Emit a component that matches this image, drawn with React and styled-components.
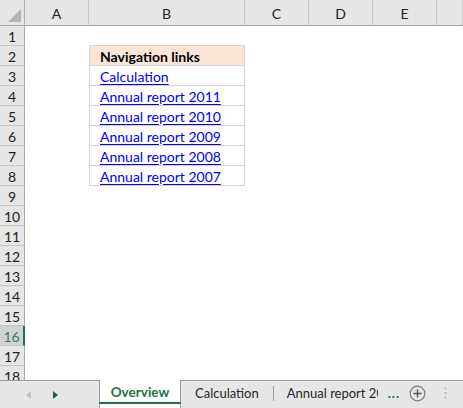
import React from 'react';
import styled, { createGlobalStyle } from 'styled-components';

const GlobalStyle = createGlobalStyle`
  html, body {
    margin: 0;
    padding: 0;
    background: #ffffff;
  }
  body {
    font-family: Lato, "Liberation Sans", sans-serif;
    width: 463px;
    height: 408px;
    overflow: hidden;
  }
`;

const Window = styled.div`
  width: 463px;
  height: 408px;
  display: flex;
  flex-direction: column;
  overflow: hidden;
`;

const Sheet = styled.div`
  flex: 0 0 380px;
  display: grid;
  grid-template-columns: 25px 64px 156px 64px 64px 64px 1fr;
  grid-template-rows: 26px repeat(18, 20px);
  overflow: hidden;
`;

const Corner = styled.div`
  background: #e6e6e6;
  border-right: 1px solid #ababab;
  border-bottom: 1px solid #ababab;
  box-sizing: border-box;
  display: flex;
  align-items: flex-end;
  justify-content: flex-end;
  padding: 0 3px 3px 0;

  svg {
    display: block;
  }
`;

const ColHead = styled.div`
  background: #e6e6e6;
  border-right: 1px solid #c6c6c6;
  border-bottom: 1px solid #ababab;
  box-sizing: border-box;
  display: flex;
  align-items: center;
  justify-content: center;
  font-size: 14px;
  color: #222;
  padding-top: 2px;
`;

const RowHead = styled.div`
  background: ${(p) => (p.$selected ? '#d2d2d2' : '#e6e6e6')};
  border-right: ${(p) => (p.$selected ? '2px solid #217346' : '1px solid #ababab')};
  border-bottom: 1px solid #c6c6c6;
  box-sizing: border-box;
  display: flex;
  align-items: center;
  justify-content: center;
  font-size: 14px;
  color: ${(p) => (p.$selected ? '#3f7a5f' : '#222')};
  padding-top: 1px;
`;

const Cell = styled.div`
  background: #ffffff;
`;

const TableCell = styled.div`
  background: ${(p) => (p.$head ? '#fce4d6' : '#ffffff')};
  border-left: 1px solid #d4d4d4;
  border-right: 1px solid #d4d4d4;
  border-top: ${(p) => (p.$head ? '1px solid #d4d4d4' : 'none')};
  border-bottom: 1px solid #d4d4d4;
  margin-top: ${(p) => (p.$head ? '-1px' : '0')};
  box-sizing: border-box;
  display: flex;
  align-items: center;
  padding: 1px 0 0 10px;
  font-size: 14px;
  font-weight: ${(p) => (p.$head ? 700 : 400)};
  color: #000;
  white-space: nowrap;
  overflow: hidden;
`;

const Link = styled.a`
  color: #0000ff;
  text-decoration: underline;
  text-underline-offset: 2px;
  cursor: pointer;
`;

const TabBar = styled.div`
  flex: 1;
  background: #e6e6e6;
  border-top: 1px solid #9d9d9d;
  box-sizing: border-box;
  display: flex;
  align-items: stretch;
  font-size: 13px;

  & > * {
    flex-shrink: 0;
  }
`;

const NavArea = styled.div`
  width: 99px;
  display: flex;
  align-items: center;
  padding-left: 26px;
  gap: 22px;
  box-sizing: border-box;
`;

const NavArrow = styled.span`
  width: 0;
  height: 0;
  border-top: 4px solid transparent;
  border-bottom: 4px solid transparent;
  ${(p) =>
    p.$dir === 'left'
      ? 'border-right: 5px solid #c4c4c4;'
      : 'border-left: 5px solid #1e5e3a;'}
`;

const ActiveTab = styled.div`
  width: 82px;
  margin-top: -1px;
  background: #ffffff;
  border-left: 1px solid #9d9d9d;
  border-right: 1px solid #9d9d9d;
  box-sizing: border-box;
  display: flex;
  align-items: center;
  justify-content: center;
  position: relative;
  color: #217346;
  font-weight: 700;
  font-size: 13.5px;
  padding-bottom: 4px;

  &::after {
    content: '';
    position: absolute;
    left: -1px;
    right: -1px;
    bottom: 4px;
    height: 2px;
    background: #217346;
  }
`;

const Tab = styled.div`
  display: flex;
  align-items: center;
  padding: 0 14px 3px 14px;
  color: #262626;
  white-space: nowrap;
  overflow: hidden;
  box-sizing: border-box;
  ${(p) => (p.$clip ? 'width: 104px; padding-left: 13px; padding-right: 0;' : '')}
`;

const Separator = styled.span`
  width: 1px;
  height: 15px;
  background: #9d9d9d;
  align-self: center;
  margin-top: -3px;
`;

const More = styled.span`
  display: flex;
  align-items: center;
  color: #217346;
  font-weight: 700;
  padding: 0 0 3px 10px;
  letter-spacing: 1px;
`;

const IconButton = styled.span`
  display: flex;
  align-items: center;
  padding: 0 0 3px ${(p) => p.$gap}px;
`;

const columns = ['A', 'B', 'C', 'D', 'E', ''];
const links = [
  'Calculation',
  'Annual report 2011',
  'Annual report 2010',
  'Annual report 2009',
  'Annual report 2008',
  'Annual report 2007',
];

export default function App() {
  const rows = Array.from({ length: 18 }, (_, i) => i + 1);

  return (
    <Window>
      <GlobalStyle />
      <Sheet>
        <Corner>
          <svg width="13" height="13" viewBox="0 0 13 13">
            <polygon points="13,0 13,13 0,13" fill="#b4b4b4" />
          </svg>
        </Corner>
        {columns.map((c, i) => (
          <ColHead key={i}>{c}</ColHead>
        ))}
        {rows.map((r) => (
          <React.Fragment key={r}>
            <RowHead $selected={r === 16}>{r}</RowHead>
            <Cell />
            {r === 2 ? (
              <TableCell $head>Navigation links</TableCell>
            ) : r >= 3 && r <= 8 ? (
              <TableCell>
                <Link>{links[r - 3]}</Link>
              </TableCell>
            ) : (
              <Cell />
            )}
            <Cell />
            <Cell />
            <Cell />
            <Cell />
          </React.Fragment>
        ))}
      </Sheet>
      <TabBar>
        <NavArea>
          <NavArrow $dir="left" />
          <NavArrow $dir="right" />
        </NavArea>
        <ActiveTab>Overview</ActiveTab>
        <Tab>Calculation</Tab>
        <Separator />
        <Tab $clip>Annual report 2010</Tab>
        <More>...</More>
        <IconButton $gap={9}>
          <svg width="17" height="17" viewBox="0 0 17 17">
            <circle cx="8.5" cy="8.5" r="7.3" fill="none" stroke="#7a7a7a" strokeWidth="1.2" />
            <path d="M8.5 4.5v8M4.5 8.5h8" stroke="#555" strokeWidth="1.4" />
          </svg>
        </IconButton>
        <IconButton $gap={18}>
          <svg width="3" height="12" viewBox="0 0 3 12">
            <circle cx="1.5" cy="1.5" r="1" fill="#b0b0b0" />
            <circle cx="1.5" cy="6" r="1" fill="#b0b0b0" />
            <circle cx="1.5" cy="10.5" r="1" fill="#b0b0b0" />
          </svg>
        </IconButton>
      </TabBar>
    </Window>
  );
}
